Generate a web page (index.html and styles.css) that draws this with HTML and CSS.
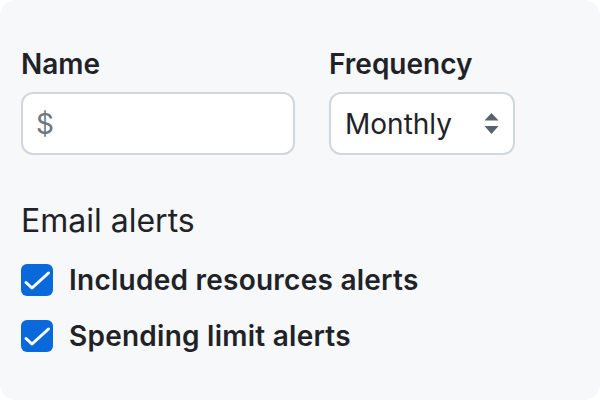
FILE: index.html
```html
<!DOCTYPE html>
<html>
<head>
<meta charset="utf-8">
<link rel="stylesheet" href="styles.css">
</head>
<body>
<div class="card">
  <div class="row">
    <div class="field">
      <label class="label">Name</label>
      <div class="input name-input"><span class="placeholder">$</span></div>
    </div>
    <div class="field">
      <label class="label">Frequency</label>
      <div class="input select">
        <span class="value">Monthly</span>
        <svg class="arrows" width="15" height="22" viewBox="0 0 15 22">
          <path d="M7.5 0 L14.5 7.5 L0.5 7.5 Z" fill="#59636e"/>
          <path d="M0.5 13 L14.5 13 L7.5 21 Z" fill="#59636e"/>
        </svg>
      </div>
    </div>
  </div>
  <div class="legend">Email alerts</div>
  <div class="checks">
    <div class="check-row">
      <span class="box"><svg width="32" height="32" viewBox="0 0 32 32"><path d="M5 18.5 L11 24 L27.5 9" fill="none" stroke="#fff" stroke-width="3" stroke-linecap="round" stroke-linejoin="round"/></svg></span>
      <span class="check-label">Included resources alerts</span>
    </div>
    <div class="check-row">
      <span class="box"><svg width="32" height="32" viewBox="0 0 32 32"><path d="M5 18.5 L11 24 L27.5 9" fill="none" stroke="#fff" stroke-width="3" stroke-linecap="round" stroke-linejoin="round"/></svg></span>
      <span class="check-label">Spending limit alerts</span>
    </div>
  </div>
</div>
</body>
</html>
```
FILE: styles.css
```css
html, body {
  margin: 0;
  padding: 0;
  background: #ffffff;
}
body {
  font-family: Inter, "Noto Sans", sans-serif;
  color: #1f2328;
}
.card {
  width: 600px;
  height: 400px;
  box-sizing: border-box;
  background: #f6f8fa;
  border-radius: 16px;
  padding: 43px 21px 0;
}
.row {
  display: flex;
  gap: 34px;
}
.field {
  display: flex;
  flex-direction: column;
  gap: 7px;
}
.label {
  font-size: 28px;
  line-height: 42px;
  font-weight: 600;
}
.input {
  box-sizing: border-box;
  height: 63px;
  border: 2px solid #d0d7de;
  border-radius: 12px;
  background: #ffffff;
  display: flex;
  align-items: center;
  padding: 0 14px 0 13px;
  font-size: 28px;
}
.name-input {
  width: 274px;
}
.placeholder {
  color: #6e7781;
}
.select {
  width: 186px;
  justify-content: space-between;
  padding-left: 14px;
}
.value {
  color: #1f2328;
}
.arrows {
  display: block;
}
.legend {
  margin-top: 45px;
  font-size: 32px;
  line-height: 42px;
  font-weight: 400;
}
.checks {
  margin-top: 17px;
  display: flex;
  flex-direction: column;
  gap: 14px;
}
.check-row {
  display: flex;
  align-items: center;
  gap: 16px;
}
.box {
  width: 32px;
  height: 32px;
  border-radius: 6px;
  background: #0969da;
  display: block;
}
.box svg {
  display: block;
}
.check-label {
  font-size: 28px;
  line-height: 42px;
  font-weight: 600;
  letter-spacing: 0.25px;
}
```
